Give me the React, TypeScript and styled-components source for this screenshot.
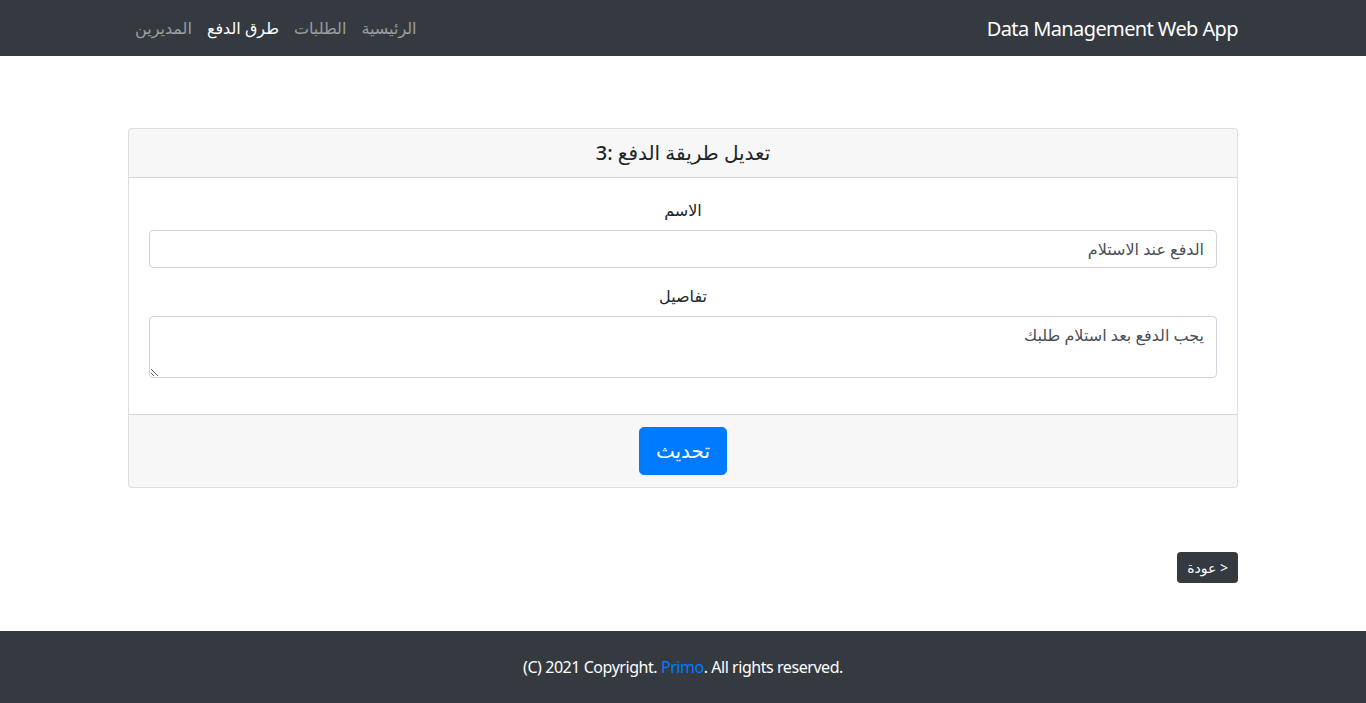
import React from "react";
import styled, { createGlobalStyle } from "styled-components";

const Global = createGlobalStyle`
  html, body { margin: 0; padding: 0; }
  body {
    font-family: "Noto Sans", "DejaVu Sans", sans-serif;
    font-size: 16px;
    line-height: 1.5;
    color: #212529;
    background: #fff;
    direction: rtl;
  }
  * { box-sizing: border-box; }
`;

const Page = styled.div`
  min-height: 703px;
  display: flex;
  flex-direction: column;
`;

const NavBar = styled.nav`
  background: #343a40;
  height: 56px;
`;

const Container = styled.div`
  width: 1140px;
  margin: 0 auto;
  padding: 0 15px;
`;

const NavInner = styled(Container)`
  height: 100%;
  display: flex;
  align-items: center;
`;

const Brand = styled.a`
  color: #fff;
  font-size: 20px;
  line-height: 30px;
  letter-spacing: -0.6px;
  text-decoration: none;
  direction: ltr;
  padding-top: 2px;
`;

const NavList = styled.ul`
  list-style: none;
  margin: 0 auto 0 0;
  padding: 0;
  display: flex;
`;

const NavLink = styled.a<{ $active?: boolean }>`
  display: block;
  padding: 8px 8px 8px 7px;
  color: ${(p) => (p.$active ? "#fff" : "rgba(255,255,255,.5)")};
  text-decoration: none;
`;

const Main = styled(Container)`
  padding-top: 72px;
  padding-bottom: 48px;
`;

const Card = styled.div`
  border: 1px solid rgba(0, 0, 0, 0.125);
  border-radius: 4px;
  background: #fff;
`;

const CardHeader = styled.div`
  background: rgba(0, 0, 0, 0.03);
  border-bottom: 1px solid rgba(0, 0, 0, 0.125);
  padding: 12px 20px;
  text-align: center;
`;

const Title = styled.h5`
  margin: 0;
  font-size: 20px;
  font-weight: 500;
  line-height: 24px;
`;

const CardBody = styled.div`
  padding: 20px;
`;

const Group = styled.div`
  margin-bottom: 16px;
  text-align: center;
`;

const Label = styled.label`
  display: inline-block;
  margin-bottom: 8px;
  line-height: 24px;
`;

const Input = styled.input`
  display: block;
  width: 100%;
  height: 38px;
  padding: 6px 12px;
  font-family: inherit;
  font-size: 16px;
  line-height: 1.5;
  color: #495057;
  border: 1px solid #ced4da;
  border-radius: 4px;
  background: #fff;
  direction: rtl;
  outline: none;
`;

const TextArea = styled.textarea`
  display: block;
  width: 100%;
  height: 62px;
  padding: 6px 12px;
  font-family: inherit;
  font-size: 16px;
  line-height: 1.5;
  color: #495057;
  border: 1px solid #ced4da;
  border-radius: 4px;
  background: #fff;
  direction: rtl;
  outline: none;
`;

const CardFooter = styled.div`
  background: rgba(0, 0, 0, 0.03);
  border-top: 1px solid rgba(0, 0, 0, 0.125);
  padding: 12px 20px;
  text-align: center;
`;

const PrimaryButton = styled.button`
  font-family: inherit;
  font-size: 20px;
  line-height: 1.5;
  padding: 8px 16px;
  height: 48px;
  color: #fff;
  background: #007bff;
  border: 1px solid #007bff;
  border-radius: 4.8px;
  cursor: pointer;
`;

const BackRow = styled.div`
  display: flex;
  justify-content: flex-start;
  margin-top: 64px;
`;

const BackButton = styled.a`
  display: inline-block;
  font-size: 14px;
  line-height: 21px;
  padding: 4px 9px;
  height: 31px;
  color: #fff;
  background: #343a40;
  border: 1px solid #343a40;
  border-radius: 3.2px;
  text-decoration: none;
`;

const Footer = styled.footer`
  margin-top: auto;
  background: #343a40;
  color: #fff;
  height: 72px;
  display: flex;
  align-items: center;
  justify-content: center;
  direction: ltr;
  letter-spacing: -0.45px;
`;

const FooterLink = styled.a`
  color: #007bff;
  text-decoration: none;
`;

export default function App() {
  return (
    <Page>
      <Global />
      <NavBar>
        <NavInner>
          <Brand href="#">Data Management Web App</Brand>
          <NavList>
            <li><NavLink href="#">الرئيسية</NavLink></li>
            <li><NavLink href="#">الطلبات</NavLink></li>
            <li><NavLink href="#" $active>طرق الدفع</NavLink></li>
            <li><NavLink href="#">المديرين</NavLink></li>
          </NavList>
        </NavInner>
      </NavBar>
      <Main>
        <Card>
          <CardHeader>
            <Title>تعديل طريقة الدفع :3</Title>
          </CardHeader>
          <CardBody>
            <Group>
              <Label>الاسم</Label>
              <Input defaultValue="الدفع عند الاستلام" />
            </Group>
            <Group>
              <Label>تفاصيل</Label>
              <TextArea defaultValue="يجب الدفع بعد استلام طلبك" />
            </Group>
          </CardBody>
          <CardFooter>
            <PrimaryButton>تحديث</PrimaryButton>
          </CardFooter>
        </Card>
        <BackRow>
          <BackButton href="#">&lt; عودة</BackButton>
        </BackRow>
      </Main>
      <Footer>
        <span>
          (C) 2021 Copyright. <FooterLink href="#">Primo</FooterLink>. All rights reserved.
        </span>
      </Footer>
    </Page>
  );
}
